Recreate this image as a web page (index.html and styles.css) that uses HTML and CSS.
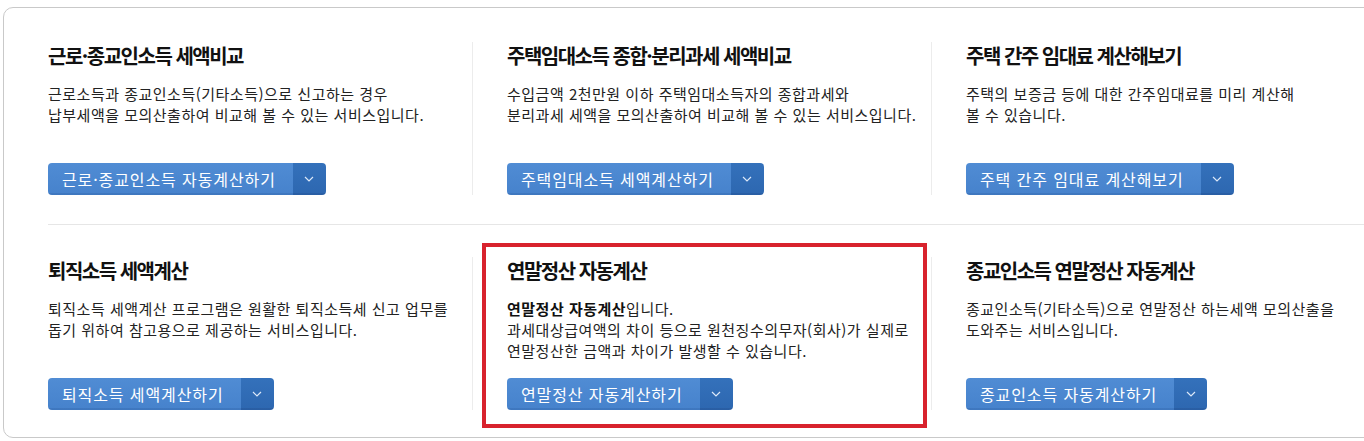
FILE: index.html
```html
<!DOCTYPE html>
<html lang="ko">
<head>
    <meta charset="UTF-8">
    <meta name="viewport" content="width=device-width, initial-scale=1.0">
    <title>세금 모의계산</title>
    <link rel="stylesheet" href="styles.css">
</head>
<body>
    <div class="card">
        <div class="row">
            <div class="item">
                <h2>근로·종교인소득 세액비교</h2>
                <p class="desc">근로소득과 종교인소득(기타소득)으로 신고하는 경우<br>납부세액을 모의산출하여 비교해 볼 수 있는 서비스입니다.</p>
                <a class="btn" href="#"><span class="label">근로·종교인소득 자동계산하기</span><span class="arrow"><svg width="10" height="6" viewBox="0 0 10 6"><polyline points="1,1 5,5 9,1" fill="none" stroke="#dce8f8" stroke-width="1.2"/></svg></span></a>
            </div>
            <div class="item">
                <h2>주택임대소득 종합·분리과세 세액비교</h2>
                <p class="desc">수입금액 2천만원 이하 주택임대소득자의 종합과세와<br>분리과세 세액을 모의산출하여 비교해 볼 수 있는 서비스입니다.</p>
                <a class="btn" href="#"><span class="label">주택임대소득 세액계산하기</span><span class="arrow"><svg width="10" height="6" viewBox="0 0 10 6"><polyline points="1,1 5,5 9,1" fill="none" stroke="#dce8f8" stroke-width="1.2"/></svg></span></a>
            </div>
            <div class="item">
                <h2>주택 간주 임대료 계산해보기</h2>
                <p class="desc">주택의 보증금 등에 대한 간주임대료를 미리 계산해<br>볼 수 있습니다.</p>
                <a class="btn" href="#"><span class="label">주택 간주 임대료 계산해보기</span><span class="arrow"><svg width="10" height="6" viewBox="0 0 10 6"><polyline points="1,1 5,5 9,1" fill="none" stroke="#dce8f8" stroke-width="1.2"/></svg></span></a>
            </div>
        </div>
        <div class="row second">
            <div class="item">
                <h2>퇴직소득 세액계산</h2>
                <p class="desc">퇴직소득 세액계산 프로그램은 원활한 퇴직소득세 신고 업무를<br>돕기 위하여 참고용으로 제공하는 서비스입니다.</p>
                <a class="btn" href="#"><span class="label">퇴직소득 세액계산하기</span><span class="arrow"><svg width="10" height="6" viewBox="0 0 10 6"><polyline points="1,1 5,5 9,1" fill="none" stroke="#dce8f8" stroke-width="1.2"/></svg></span></a>
            </div>
            <div class="item highlight">
                <h2>연말정산 자동계산</h2>
                <p class="desc"><strong>연말정산 자동계산</strong>입니다.<br>과세대상급여액의 차이 등으로 원천징수의무자(회사)가 실제로<br>연말정산한 금액과 차이가 발생할 수 있습니다.</p>
                <a class="btn" href="#"><span class="label">연말정산 자동계산하기</span><span class="arrow"><svg width="10" height="6" viewBox="0 0 10 6"><polyline points="1,1 5,5 9,1" fill="none" stroke="#dce8f8" stroke-width="1.2"/></svg></span></a>
            </div>
            <div class="item">
                <h2>종교인소득 연말정산 자동계산</h2>
                <p class="desc">종교인소득(기타소득)으로 연말정산 하는세액 모의산출을<br>도와주는 서비스입니다.</p>
                <a class="btn" href="#"><span class="label">종교인소득 자동계산하기</span><span class="arrow"><svg width="10" height="6" viewBox="0 0 10 6"><polyline points="1,1 5,5 9,1" fill="none" stroke="#dce8f8" stroke-width="1.2"/></svg></span></a>
            </div>
        </div>
    </div>
</body>
</html>
```

FILE: styles.css
```css
body {
    margin: 0;
    background: #fff;
    font-family: "Noto Sans CJK KR", "Noto Sans", sans-serif;
    color: #222;
    overflow: hidden;
}
.card {
    margin: 7px -30px 0 3px;
    padding-left: 44px;
    border: 1px solid #c9c9c9;
    border-radius: 10px;
}
.row {
    display: grid;
    grid-template-columns: 424px 459px 1fr;
    padding: 34px 0 29px;
}
.row.second {
    border-top: 1px solid #e6e6e6;
    padding: 32px 0 27px;
}
.item {
    display: flex;
    flex-direction: column;
    align-items: flex-start;
}
.item + .item {
    border-left: 1px solid #ececec;
    padding-left: 34px;
}
.item h2 {
    margin: 0 0 13px;
    font-size: 20px;
    line-height: 28px;
    font-weight: 700;
    letter-spacing: -1.5px;
    color: #111;
}
.desc {
    margin: 0;
    font-size: 15px;
    line-height: 21px;
    letter-spacing: 0.5px;
    min-height: 63px;
    white-space: nowrap;
    color: #222;
}
.desc strong {
    font-weight: 700;
    color: #111;
}
.btn {
    display: inline-flex;
    height: 32px;
    margin-top: 17px;
    border-radius: 4px;
    overflow: hidden;
    text-decoration: none;
    color: #fff;
}
.btn .label {
    display: flex;
    align-items: center;
    padding: 0 17px 1px 14px;
    font-size: 16px;
    letter-spacing: 0.9px;
    background: linear-gradient(#508cd4, #4682cc);
    box-shadow: inset 0 -2px 0 rgba(20, 60, 120, 0.15);
}
.btn .arrow {
    display: flex;
    align-items: center;
    justify-content: center;
    width: 33px;
    background: linear-gradient(#3471bb, #2d67b0);
    box-shadow: inset 0 -2px 0 rgba(20, 50, 100, 0.15);
}
.highlight {
    position: relative;
}
.highlight::after {
    content: "";
    position: absolute;
    top: -14px;
    left: 9px;
    right: 4px;
    bottom: -18px;
    border: 4px solid #d8222d;
    pointer-events: none;
}
```
